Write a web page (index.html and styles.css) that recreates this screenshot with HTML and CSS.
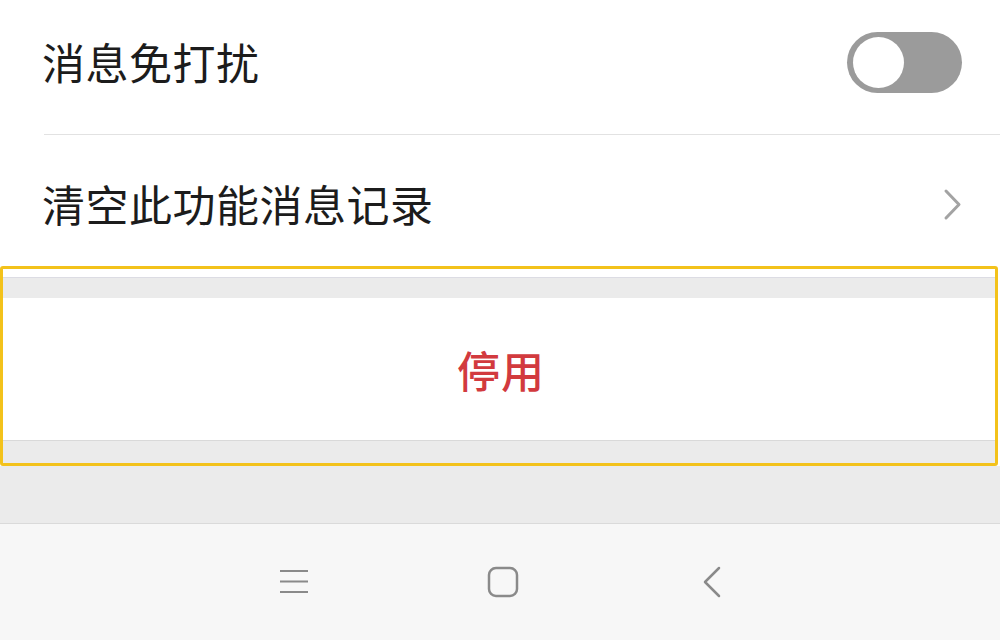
FILE: index.html
```html
<!DOCTYPE html>
<html lang="zh-CN">
<head>
    <meta charset="UTF-8">
    <meta name="viewport" content="width=device-width, initial-scale=1.0">
    <title>设置</title>
    <link rel="stylesheet" href="styles.css">
</head>
<body>
    <div class="settings">
        <div class="row row-first">
            <span class="label">消息免打扰</span>
            <div class="switch"><div class="knob"></div></div>
        </div>
        <div class="row row-second">
            <span class="label">清空此功能消息记录</span>
            <svg class="chevron" width="22" height="34" viewBox="0 0 22 34">
                <path d="M4 3 L17 16.5 L4 30" fill="none" stroke="#a3a3a3" stroke-width="3" stroke-linecap="round" stroke-linejoin="round"/>
            </svg>
        </div>
    </div>

    <div class="danger-box">
        <div class="gap-top"></div>
        <div class="disable-btn">停用</div>
        <div class="gap-bottom"></div>
    </div>

    <div class="filler"></div>

    <div class="navbar">
        <div class="nav-slot">
            <svg width="30" height="26" viewBox="0 0 30 26">
                <path d="M1 2 H29 M1 12.5 H29 M1 23 H29" stroke="#8a8a8a" stroke-width="2" fill="none"/>
            </svg>
        </div>
        <div class="nav-slot">
            <svg width="32" height="32" viewBox="0 0 32 32">
                <rect x="2" y="2" width="28" height="28" rx="7" fill="none" stroke="#8a8a8a" stroke-width="2.5"/>
            </svg>
        </div>
        <div class="nav-slot">
            <svg width="20" height="32" viewBox="0 0 20 32">
                <path d="M17 2 L3 16 L17 30" fill="none" stroke="#8a8a8a" stroke-width="2.5" stroke-linecap="round" stroke-linejoin="round"/>
            </svg>
        </div>
    </div>
</body>
</html>
```

FILE: styles.css
```css
body {
    font-family: "Noto Sans CJK SC", "Noto Sans", sans-serif;
    margin: 0;
    padding: 0;
    background-color: #ffffff;
    width: 1000px;
    height: 640px;
    overflow: hidden;
}

.settings {
    padding-left: 44px;
}

.row {
    display: flex;
    align-items: center;
    justify-content: space-between;
    padding-right: 38px;
    box-sizing: border-box;
}

.row-first {
    height: 135px;
    padding-bottom: 13px;
    border-bottom: 1px solid #e2e2e2;
}

.row-first .switch {
    margin-top: 4px;
}

.row-second {
    height: 131px;
    padding-top: 5px;
}

.row-second .chevron {
    margin-top: 4px;
}

.label {
    font-size: 43px;
    color: #1c1c1c;
    letter-spacing: 0.5px;
    margin-left: -2px;
}

.switch {
    width: 115px;
    height: 61px;
    background-color: #9b9b9b;
    border-radius: 31px;
    display: flex;
    align-items: center;
    padding-left: 6px;
    box-sizing: border-box;
}

.knob {
    width: 51px;
    height: 51px;
    border-radius: 50%;
    background-color: #ffffff;
}

.chevron {
    margin-right: -2px;
}

.danger-box {
    width: 998px;
    border: 3px solid #f3c21b;
    border-radius: 3px;
    box-sizing: border-box;
}

.gap-top {
    margin-top: 8px;
    height: 20px;
    background-color: #ebebeb;
    border-top: 1px solid #dcdce3;
}

.disable-btn {
    height: 143px;
    display: flex;
    align-items: center;
    justify-content: center;
    font-size: 43px;
    font-weight: 500;
    color: #d23a3e;
    letter-spacing: 1px;
    padding-left: 4px;
    border-bottom: 1px solid #d9d9d9;
    box-sizing: border-box;
}

.gap-bottom {
    height: 22px;
    background-color: #ebebeb;
}

.filler {
    height: 57px;
    background-color: #ebebeb;
    border-bottom: 1px solid #dadada;
}

.navbar {
    height: 116px;
    background-color: #f7f7f7;
    display: flex;
    justify-content: center;
    align-items: center;
    padding-left: 6px;
}

.nav-slot {
    width: 209px;
    display: flex;
    justify-content: center;
    align-items: center;
}
```
